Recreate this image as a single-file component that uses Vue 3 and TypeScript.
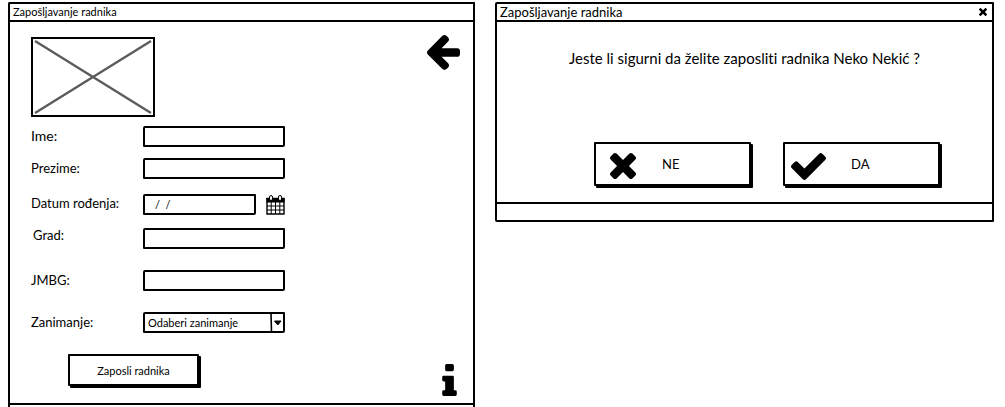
<script setup lang="ts">
import { ref } from 'vue'

interface Field {
  id: string
  label: string
  kind: 'text' | 'date' | 'select'
}

const fields: Field[] = [
  { id: 'ime', label: 'Ime:', kind: 'text' },
  { id: 'prezime', label: 'Prezime:', kind: 'text' },
  { id: 'datum', label: 'Datum rođenja:', kind: 'date' },
  { id: 'grad', label: 'Grad:', kind: 'text' },
  { id: 'jmbg', label: 'JMBG:', kind: 'text' },
  { id: 'zanimanje', label: 'Zanimanje:', kind: 'select' },
]

const values = ref<Record<string, string>>({
  ime: '',
  prezime: '',
  datum: '/  /',
  grad: '',
  jmbg: '',
  zanimanje: 'Odaberi zanimanje',
})

const crossPath =
  'M1490 1322q0 40-28 68l-136 136q-28 28-68 28t-68-28l-294-294-294 294q-28 28-68 28t-68-28l-136-136q-28-28-28-68t28-68l294-294-294-294q-28-28-28-68t28-68l136-136q28-28 68-28t68 28l294 294 294-294q28-28 68-28t68 28l136 136q28 28 28 68t-28 68l-294 294 294 294q28 28 28 68z'
</script>

<template>
  <main class="page">
    <section class="window employee">
      <header class="titlebar"><h1>Zapošljavanje radnika</h1></header>
      <div class="body">
        <form class="form" @submit.prevent>
          <svg class="photo" viewBox="0 0 124 80" role="img" aria-label="Fotografija">
            <rect x="1" y="1" width="122" height="78" fill="#fff" stroke="#000" stroke-width="2" />
            <path d="M4 4L120 76M120 4L4 76" stroke="#5c5c5c" stroke-width="2.4" />
          </svg>
          <div v-for="f in fields" :key="f.id" class="row" :class="f.id">
            <label :for="f.id">{{ f.label }}</label>
            <div v-if="f.kind === 'select'" class="select">
              <select :id="f.id" v-model="values[f.id]">
                <option>Odaberi zanimanje</option>
              </select>
              <svg class="caret" viewBox="0 0 14 18" aria-hidden="true">
                <path d="M1 0L1.5 18" stroke="#000" stroke-width="1.6" />
                <path d="M4.500 7H11L7.800 11z" stroke="#000" stroke-width="1" stroke-linejoin="round" />
              </svg>
            </div>
            <div v-else-if="f.kind === 'date'" class="date">
              <input :id="f.id" v-model="values[f.id]" type="text" />
              <button type="button" class="icon" aria-label="Kalendar">
                <svg width="19" height="20" viewBox="0 0 19 20">
                  <path d="M1 3.500H18V19H1z" fill="#fff" stroke="#000" stroke-width="1.4" />
                  <path d="M.5 3H18.500V7.500H.5z" />
                  <path d="M5.200 7V19M9.500 7V19M13.800 7V19M1 11H18M1 15H18" stroke="#000" stroke-width="1" />
                  <rect x="3.500" y=".5" width="3" height="5" rx="1.500" fill="#fff" stroke="#000" />
                  <rect x="12.500" y=".5" width="3" height="5" rx="1.500" fill="#fff" stroke="#000" />
                </svg>
              </button>
            </div>
            <input v-else :id="f.id" v-model="values[f.id]" type="text" />
          </div>
          <button type="submit" class="sketch submit">Zaposli radnika</button>
        </form>
        <nav class="side">
          <button type="button" class="icon" aria-label="Nazad">
            <svg width="33" height="35" viewBox="64 -75 1472 1560">
              <path d="M1536 640v128q0 53-32.500 90.500t-84.500 37.500h-704l293 294q38 36 38 90t-38 90l-75 76q-37 37-90 37-52 0-91-37l-651-652q-37-37-37-90 0-52 37-91l651-650q38-38 91-38 52 0 90 38l75 74q38 38 38 91t-38 91l-293 293h704q52 0 84.500 37.500t32.500 90.500z" />
            </svg>
          </button>
          <button type="button" class="icon info" aria-label="Informacije">
            <svg width="15" height="32" viewBox="576 128 640 1408">
              <path d="M1216 1344v128q0 26-19 45t-45 19h-512q-26 0-45-19t-19-45v-128q0-26 19-45t45-19h64v-384h-64q-26 0-45-19t-19-45v-128q0-26 19-45t45-19h384q26 0 45 19t19 45v576h64q26 0 45 19t19 45zm-128-1152v192q0 26-19 45t-45 19h-256q-26 0-45-19t-19-45v-192q0-26 19-45t45-19h256q26 0 45 19t19 45z" />
            </svg>
          </button>
        </nav>
      </div>
      <footer class="statusbar"></footer>
    </section>

    <section class="window dialog" role="dialog" aria-labelledby="dialog-title">
      <header class="titlebar">
        <h2 id="dialog-title">Zapošljavanje radnika</h2>
        <button type="button" class="icon" aria-label="Zatvori">
          <svg width="8" height="8" viewBox="302 366 1188 1188"><path :d="crossPath" /></svg>
        </button>
      </header>
      <p class="question">Jeste li sigurni da želite zaposliti radnika Neko Nekić ?</p>
      <div class="actions">
        <button type="button" class="sketch choice">
          <svg width="26" height="26" viewBox="302 366 1188 1188"><path :d="crossPath" /></svg>
          <span>NE</span>
        </button>
        <button type="button" class="sketch choice yes">
          <svg width="35" height="27" viewBox="121 334 1550 1188">
            <path d="M1671 566q0 40-28 68l-724 724-136 136q-28 28-68 28t-68-28l-136-136-362-362q-28-28-28-68t28-68l136-136q28-28 68-28t68 28l294 295 656-657q28-28 68-28t68 28l136 136q28 28 28 68z" />
          </svg>
          <span>DA</span>
        </button>
      </div>
      <footer class="statusbar"></footer>
    </section>
  </main>
</template>

<style>
body {
  margin: 0;
  background: #fff;
}
</style>

<style scoped>
.page {
  box-sizing: border-box;
  min-height: 100vh;
  padding: 2px 11px 0 8px;
  display: grid;
  grid-template-columns: 467fr 499fr;
  column-gap: 20px;
  align-items: start;
  font-family: Lato, 'Open Sans', sans-serif;
  font-variant-ligatures: none;
  color: #000;
}
.page * {
  box-sizing: border-box;
}
button,
input,
select {
  font: inherit;
  color: inherit;
  margin: 0;
}
.window {
  border: 2px solid #000;
  border-radius: 2px 1px 1px 2px;
  display: flex;
  flex-direction: column;
}
.employee {
  border-bottom: 0;
  border-radius: 2px 1px 0 0;
  min-height: calc(100vh - 2px);
}
.titlebar {
  height: 18px;
  border-bottom: 2px solid #000;
  padding: 0 5px 0 3px;
  display: flex;
  align-items: center;
  justify-content: space-between;
}
h1,
h2 {
  margin: 0;
  font-size: 11px;
  line-height: 16px;
  font-weight: 400;
}
h2 {
  font-size: 13px;
}
.icon {
  padding: 0;
  border: 0;
  background: none;
  cursor: pointer;
}
.icon svg {
  display: block;
}
.body {
  flex: 1;
  display: flex;
  justify-content: space-between;
  padding: 13px 13px 7px 21px;
}
.form {
  padding-top: 2px;
}
.photo {
  display: block;
  width: 124px;
  height: 80px;
  margin: 0 0 9px;
}
.row {
  display: grid;
  grid-template-columns: 112px 142px;
  align-items: center;
  font-size: 13px;
  line-height: 12px;
  height: 21px;
  margin-bottom: 11px;
}
.row label {
  padding-bottom: 2px;
}
.row.ime {
  font-size: 14px;
}
.row.prezime {
  margin-bottom: 15px;
}
.row.datum {
  margin-bottom: 13px;
}
.row.grad,
.row.jmbg,
.row.zanimanje {
  margin-bottom: 21px;
}
.row.datum label {
  padding-bottom: 4px;
}
.row.grad label {
  padding: 0 0 8px 2px;
}
input,
select {
  width: 100%;
  height: 21px;
  border: 2px solid #000;
  border-radius: 2px 1px 2px 1px;
  background: #fff;
  padding: 0 10px;
  font-size: 11px;
  outline: none;
}
.date {
  display: flex;
  align-items: center;
  gap: 10px;
}
.date input {
  flex: 1;
  min-width: 0;
  white-space: pre;
}
.select {
  position: relative;
}
select {
  display: block;
  appearance: none;
  padding: 0 16px 0 3px;
}
.caret {
  position: absolute;
  right: 1px;
  top: 2px;
  width: 14px;
  height: 18px;
  pointer-events: none;
}
.sketch {
  border: 2px solid #000;
  border-radius: 1px;
  background: #fff;
  cursor: pointer;
}
.submit {
  display: block;
  width: 131px;
  height: 32px;
  margin-left: 37px;
  font-size: 11px;
  box-shadow: 2px 2px 0 #000;
}
.side {
  display: flex;
  flex-direction: column;
  justify-content: space-between;
  align-items: flex-end;
}
.info {
  margin-right: 3px;
}
.statusbar {
  height: 4px;
  border-top: 2px solid #000;
}
.question {
  margin: 27px 0 0;
  text-align: center;
  font-size: 15px;
  line-height: 18px;
}
.actions {
  display: flex;
  justify-content: flex-end;
  gap: 32px;
  margin: 75px 52px 16px 0;
}
.choice {
  width: 157px;
  height: 44px;
  display: grid;
  grid-template-columns: 52px 1fr;
  align-items: center;
  padding: 0 0 0 14px;
  font-size: 13px;
  text-align: left;
  box-shadow: 2px 2px 0 #000;
}
.choice svg {
  margin-top: 4px;
}
.yes {
  grid-template-columns: 60px 1fr;
  padding-left: 6px;
}
.dialog .statusbar {
  height: 18px;
}
</style>
